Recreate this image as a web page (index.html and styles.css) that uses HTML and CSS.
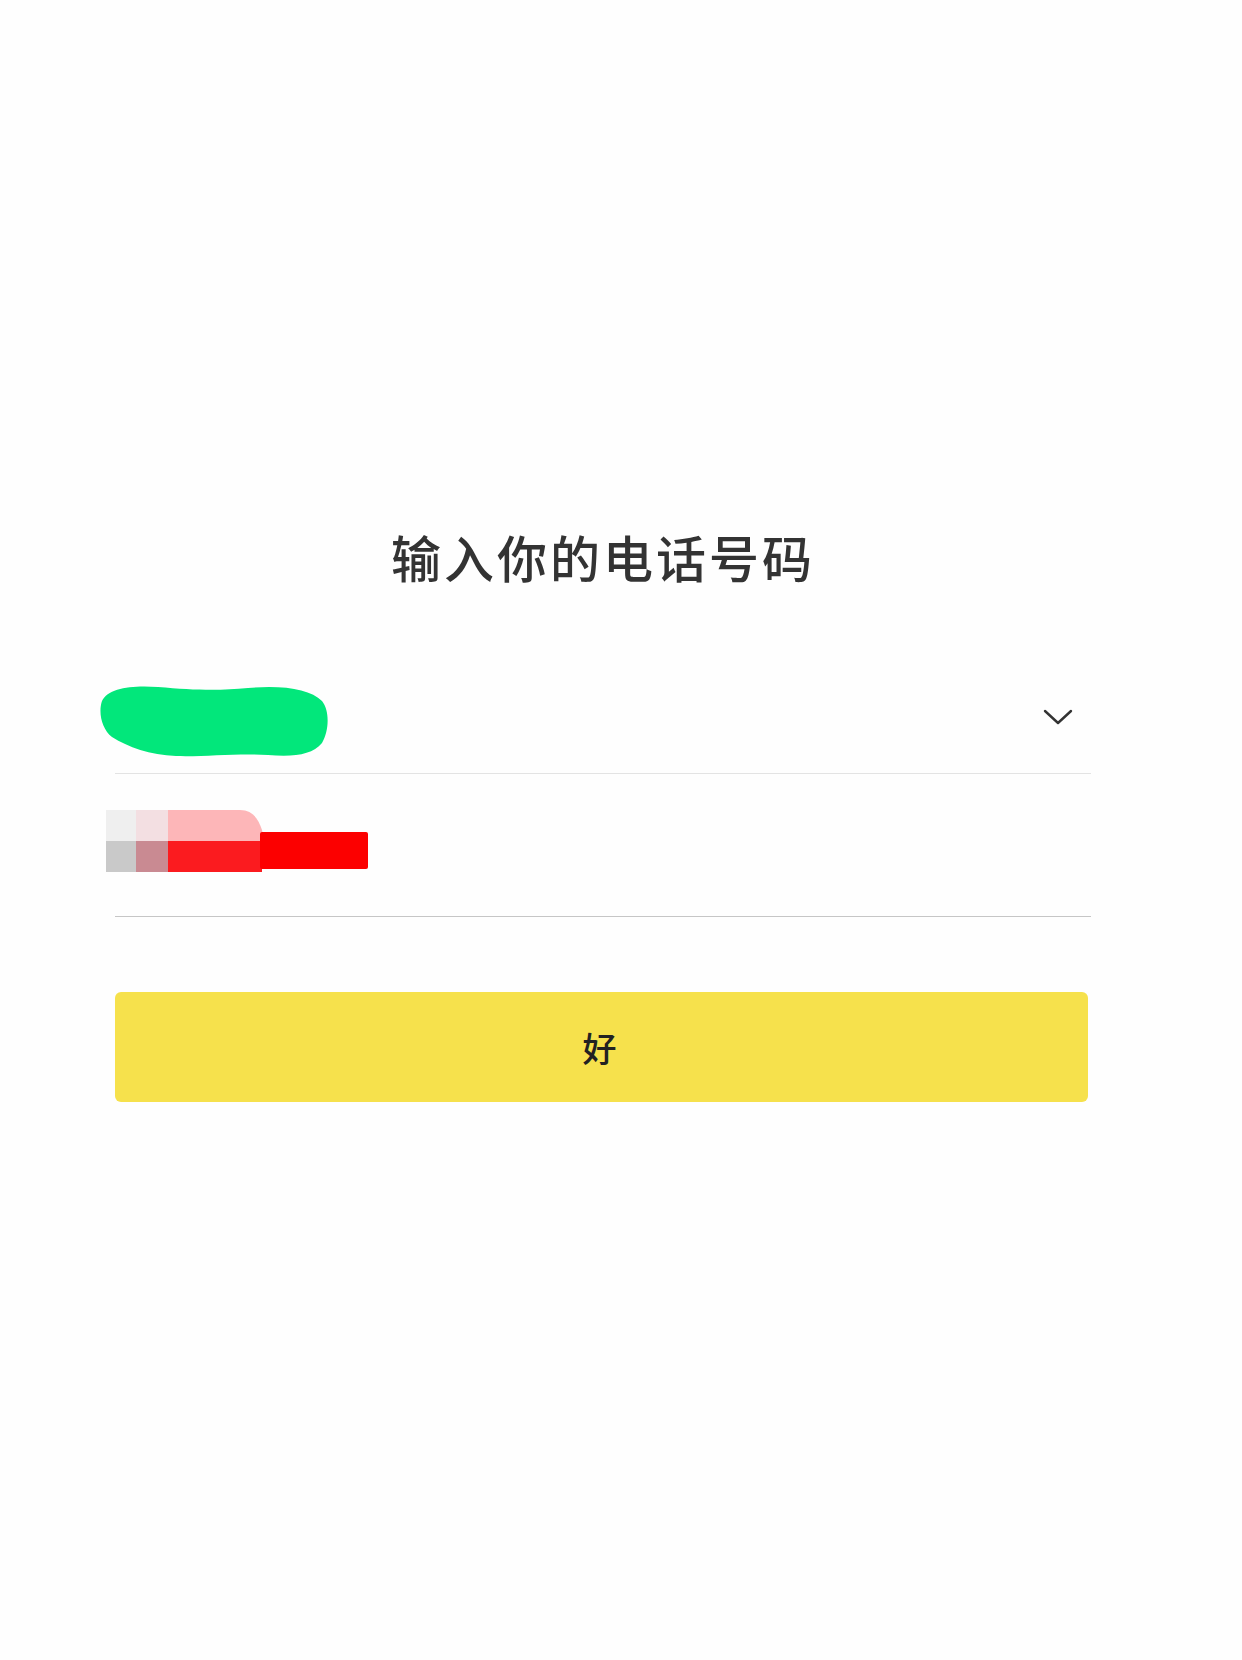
FILE: index.html
```html
<!DOCTYPE html>
<html lang="zh-CN">
<head>
<meta charset="utf-8">
<title>输入你的电话号码</title>
<link rel="stylesheet" href="styles.css">
</head>
<body>
<main class="screen">
  <h1 class="title">输入你的电话号码</h1>
  <form class="form">
    <div class="field field-country">
      <svg class="mask-green" width="230" height="72" viewBox="0 0 230 72" aria-hidden="true">
        <path d="M4 16 C10 3 34 0 60 2 C95 5 120 6 150 3 C185 0 212 4 224 16 C232 26 231 46 224 58 C214 70 196 72 170 70 C140 68 105 72 78 71 C52 70 30 62 14 52 C4 44 0 28 4 16 Z" fill="#02e77b"/>
      </svg>
      <svg class="chevron" width="30" height="16" viewBox="0 0 30 16" aria-hidden="true">
        <path d="M2 2 L15 14 L28 2" fill="none" stroke="#333" stroke-width="2.4" stroke-linecap="round" stroke-linejoin="round"/>
      </svg>
    </div>
    <div class="field field-phone">
      <svg class="mask-red" width="262" height="62" viewBox="0 0 262 62" aria-hidden="true">
        <rect x="0" y="0" width="30" height="31" fill="#efefef"/>
        <rect x="30" y="0" width="32" height="31" fill="#f3dfe2"/>
        <path d="M62 0 H134 C146 0 152 8 156 20 L158 31 H62 Z" fill="#fdb6b8"/>
        <rect x="0" y="31" width="30" height="31" fill="#c9c9c9"/>
        <rect x="30" y="31" width="32" height="31" fill="#c98a92"/>
        <rect x="62" y="31" width="94" height="31" fill="#fb1b1f"/>
        <rect x="154" y="22" width="108" height="37" rx="2" fill="#fc0000"/>
      </svg>
    </div>
    <button type="button" class="btn-ok">好</button>
  </form>
</main>
</body>
</html>
```

FILE: styles.css
```css
* {
  box-sizing: border-box;
}

html, body {
  margin: 0;
  padding: 0;
  background: #fefefe;
}

body {
  font-family: "Noto Sans CJK SC", "Noto Sans", sans-serif;
  color: #333;
}

.screen {
  width: 1242px;
  height: 1660px;
  padding-top: 526px;
  padding-left: 115px;
}

.title {
  width: 976px;
  margin: 0;
  font-size: 50px;
  line-height: 60px;
  font-weight: 500;
  letter-spacing: 3px;
  text-align: center;
  color: #333;
}

.form {
  width: 976px;
  margin-top: 74px;
  display: flex;
  flex-direction: column;
}

.field {
  display: flex;
  align-items: center;
  justify-content: space-between;
}

.field-country {
  padding-top: 25px;
  padding-bottom: 16px;
  border-bottom: 1.5px solid #e3e3e3;
}

.mask-green {
  display: block;
  margin-left: -17px;
}

.chevron {
  display: block;
  margin-right: 18px;
  margin-bottom: 8px;
}

.field-phone {
  padding-top: 36px;
  padding-bottom: 44px;
  border-bottom: 1.5px solid #c6c6c6;
}

.mask-red {
  display: block;
  margin-left: -9px;
}

.btn-ok {
  margin-top: 75px;
  height: 110px;
  width: 973px;
  border: none;
  border-radius: 6px;
  background: #f6e14c;
  font-family: "Noto Sans CJK SC", "Noto Sans", sans-serif;
  font-size: 34px;
  font-weight: 500;
  color: #222;
  padding: 0;
  padding-right: 4px;
}
```
